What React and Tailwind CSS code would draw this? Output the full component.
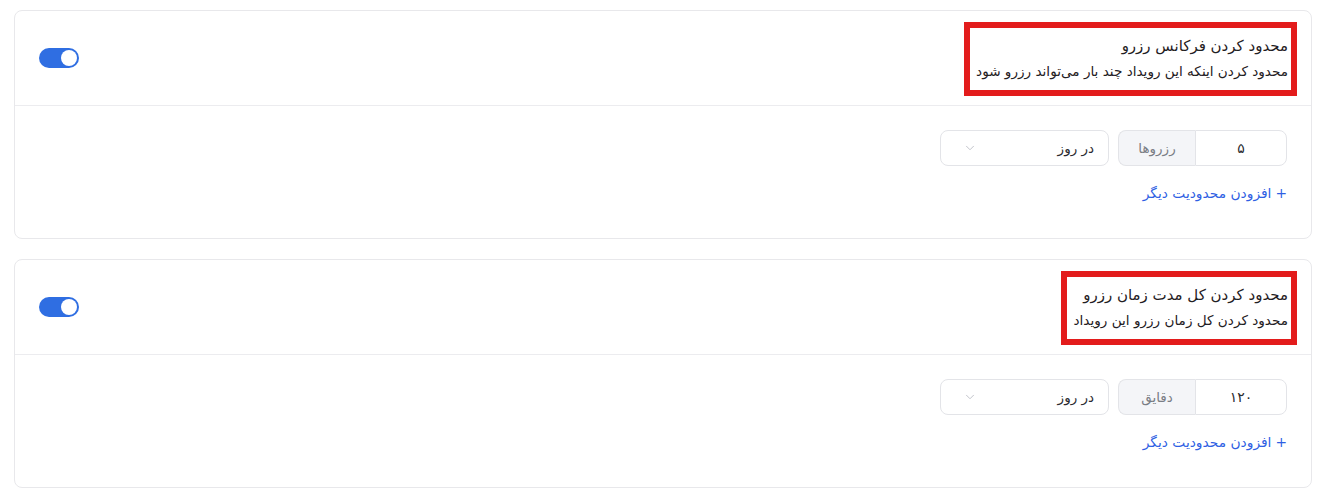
import React from 'react';
import { ChevronDown } from 'lucide-react';

const Toggle = () => (
    <div className="mt-[26px] w-10 h-5 rounded-full bg-[#2f6ee2] flex items-center justify-start px-[2px]">
        <span className="w-4 h-4 rounded-full bg-white"></span>
    </div>
);

const LimitCard = ({ title, desc, value, unit }) => {
    return (
        <div className="bg-white border border-[#e8e8eb] rounded-lg">
            {/* Header */}
            <div className="h-[95px] flex items-start justify-between px-6 pt-[11px] border-b border-[#ececef]">
                <div className="-mr-[10px] border-[6px] border-[#e31c1c] pr-[3px] pl-[6px] pt-[6px] pb-[8px]">
                    <h3 className="text-[15px] leading-6 text-[#1f2023]">{title}</h3>
                    <p className="mt-[2px] text-[13.6px] leading-[22px] text-[#1f2023]">{desc}</p>
                </div>
                <Toggle />
            </div>

            {/* Body */}
            <div className="px-6 pt-6 pb-[35px]">
                <div className="flex items-center">
                    <div className="flex h-9">
                        <div className="w-[92px] border border-[#e3e4e8] rounded-r-lg flex items-center justify-center text-[14px] text-[#2a2b2f]">
                            {value}
                        </div>
                        <div className="w-[77px] border border-r-0 border-[#e3e4e8] rounded-l-lg bg-[#f4f5f8] flex items-center justify-center text-[13.5px] text-[#7a7d85]">
                            {unit}
                        </div>
                    </div>
                    <div className="mr-[9px] w-[169px] h-9 border border-[#e3e4e8] rounded-lg flex items-center justify-between pr-[14px] pl-[22px] text-[13.5px] text-[#2a2b2f]">
                        <span>در روز</span>
                        <ChevronDown size={14} strokeWidth={1.5} className="text-[#b9bcc3]" />
                    </div>
                </div>
                <button className="mt-[17px] flex items-center gap-1 text-[13.8px] leading-5 text-[#2f5fe3]">
                    <span>+</span>
                    <span>افزودن محدودیت دیگر</span>
                </button>
            </div>
        </div>
    );
};

const App = () => {
    return (
        <div dir="rtl" className="min-h-screen bg-white pt-[10px] pl-[14px] pr-[10px] flex flex-col gap-5" style={{ fontFamily: "'DejaVu Sans', 'Noto Sans', sans-serif" }}>
            <LimitCard
                title="محدود کردن فرکانس رزرو"
                desc="محدود کردن اینکه این رویداد چند بار می‌تواند رزرو شود"
                value="۵"
                unit="رزروها"
            />
            <LimitCard
                title="محدود کردن کل مدت زمان رزرو"
                desc="محدود کردن کل زمان رزرو این رویداد"
                value="۱۲۰"
                unit="دقایق"
            />
        </div>
    );
};

export default App;
